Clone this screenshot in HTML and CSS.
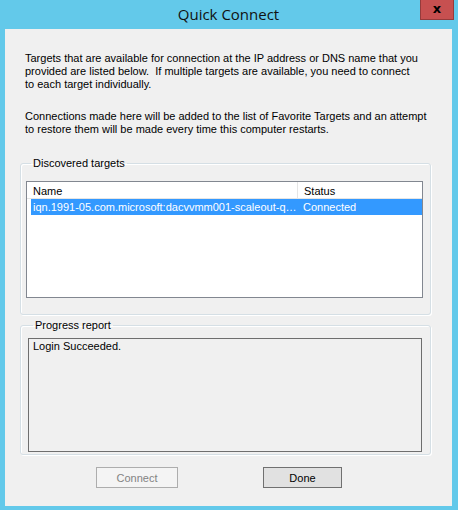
FILE: index.html
```html
<!DOCTYPE html>
<html>
<head>
<meta charset="utf-8">
<link rel="stylesheet" href="styles.css">
</head>
<body>
<div class="window">
  <div class="titlebar">
    <span class="title">Quick Connect</span>
    <div class="close">x</div>
  </div>
  <div class="client">
    <p class="para">Targets that are available for connection at the IP address or DNS name that you<br>provided are listed below.&nbsp; If multiple targets are available, you need to connect<br>to each target individually.</p>
    <p class="para para2">Connections made here will be added to the list of Favorite Targets and an attempt<br>to restore them will be made every time this computer restarts.</p>
    <fieldset class="group group1">
      <legend>Discovered targets</legend>
      <div class="listview">
        <div class="lv-header">
          <div class="col-name hcell">Name</div>
          <div class="col-status hcell">Status</div>
        </div>
        <div class="lv-row selected">
          <div class="col-name cell">iqn.1991-05.com.microsoft:dacvvmm001-scaleout-q…</div>
          <div class="col-status cell">Connected</div>
        </div>
      </div>
    </fieldset>
    <fieldset class="group group2">
      <legend>Progress report</legend>
      <div class="progress">Login Succeeded.</div>
    </fieldset>
    <div class="buttons">
      <button class="btn btn-connect" disabled>Connect</button>
      <button class="btn btn-done">Done</button>
    </div>
  </div>
</div>
</body>
</html>
```
FILE: styles.css
```css
html, body {
  margin: 0;
  padding: 0;
}
body {
  width: 458px;
  height: 510px;
  background: #63c9ea;
  font-family: "Liberation Sans", Arial, sans-serif;
  font-size: 11px;
  color: #000;
  overflow: hidden;
}
.window {
  display: flex;
  flex-direction: column;
  height: 510px;
}
.titlebar {
  position: relative;
  height: 29px;
  display: flex;
  justify-content: center;
}
.title {
  font-family: "Open Sans", "Noto Sans", sans-serif;
  font-size: 15px;
  line-height: 28px;
  color: #111;
  margin-left: -1px;
}
.close {
  position: absolute;
  left: 420px;
  top: 0;
  width: 32px;
  height: 19px;
  background: #c75050;
  border: 1px solid #953b3b;
  border-top: none;
  color: #000;
  font-family: "DejaVu Sans", sans-serif;
  font-weight: bold;
  font-size: 13px;
  line-height: 17px;
  text-align: center;
}
.client {
  margin: 0 6px 0 5px;
  height: 477px;
  background: #f0f0f0;
  padding: 23px 0 0 0;
  box-sizing: border-box;
  display: flex;
  flex-direction: column;
}
.para {
  margin: 0 0 0 20px;
  line-height: 13px;
  white-space: nowrap;
}
.para2 {
  margin-top: 19px;
}
.group {
  margin: 0;
  border: 1px solid #d5dfe5;
  border-radius: 3px;
  box-shadow: inset 1px 1px 0 #fff, 1px 1px 0 #fff;
  padding: 0;
  min-width: 0;
}
.group legend {
  margin-left: 5px;
  padding: 0 2px;
  line-height: 13px;
  color: #000;
}
.group1 {
  margin: 21px 0 0 15px;
  width: 411px;
  height: 158px;
  box-sizing: border-box;
  padding: 11px 0 0 5px;
}
.listview {
  width: 397px;
  height: 117px;
  box-sizing: border-box;
  border: 1px solid #828790;
  background: #fff;
}
.lv-header {
  display: flex;
  height: 16px;
  border-bottom: 1px solid #e5e5e5;
  background: #fff;
  line-height: 18px;
}
.hcell {
  padding-left: 6px;
  box-sizing: border-box;
}
.lv-header .col-name {
  border-right: 1px solid #e5e5e5;
}
.col-name {
  width: 271px;
  flex: none;
}
.col-status {
  flex: 1;
}
.lv-row {
  display: flex;
  height: 16px;
  margin: 0 0 0 4px;
  line-height: 16px;
}
.lv-row.selected {
  background: #3399ff;
  color: #fff;
}
.lv-row .col-name {
  width: 267px;
}
.cell {
  padding-left: 2px;
  box-sizing: border-box;
  white-space: nowrap;
  overflow: hidden;
}
.lv-row .col-status {
  padding-left: 5px;
}
.group2 {
  margin: 4px 0 0 15px;
  width: 411px;
  height: 136px;
  box-sizing: border-box;
  padding: 6px 0 0 7px;
}
.progress {
  width: 394px;
  height: 114px;
  box-sizing: border-box;
  border: 1px solid #6e6e6e;
  background: #f0f0f0;
  padding: 1px 0 0 4px;
  line-height: 13px;
}
.buttons {
  display: flex;
  margin: 12px 0 0 91px;
  gap: 85px;
}
.btn {
  height: 21px;
  font-family: "Liberation Sans", Arial, sans-serif;
  font-size: 11px;
  padding: 0;
  margin: 0;
}
.btn-connect {
  width: 82px;
  border: 1px solid #adadad;
  background: #f4f4f4;
  color: #838383;
}
.btn-done {
  width: 79px;
  border: 1px solid #707070;
  background: #e1e1e1;
  color: #000;
}
```
